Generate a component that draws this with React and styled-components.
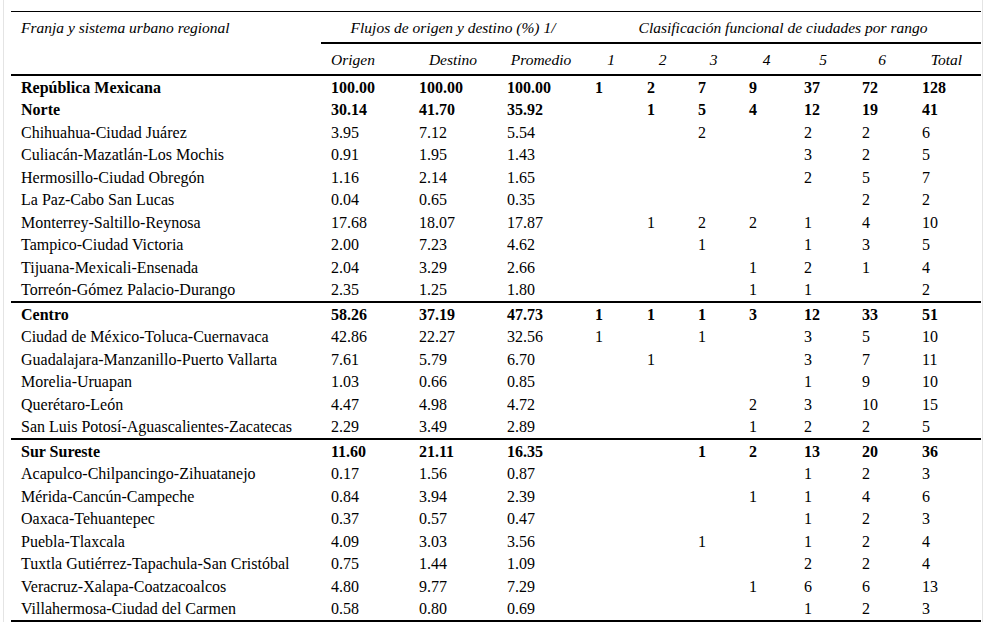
import React from "react";
import styled, { createGlobalStyle } from "styled-components";

const Global = createGlobalStyle`
  html, body { margin: 0; padding: 0; background: #fff; }
  body { font-family: "Liberation Serif", "Times New Roman", serif; color: #000; }
`;

const Frame = styled.div`
  margin-left: 3px;
  width: 980px;
  box-sizing: border-box;
  border-left: 1px solid #e4e4e4;
  border-right: 1px solid #e4e4e4;
  padding: 11px 1px 0 7px;
`;

const Table = styled.table`
  width: 970px;
  table-layout: fixed;
  border-collapse: separate;
  border-spacing: 0;
  font-family: "Liberation Serif", "Times New Roman", serif;
  font-size: 16px;
  color: #000;
`;

const Col = styled.col`
  width: ${(p) => p.$w}px;
`;

const HeadCell = styled.th`
  font-family: "Liberation Serif", "Times New Roman", serif;
  font-weight: normal;
  font-style: italic;
  font-size: 15.5px;
  height: 30px;
  padding: 0 10px;
  box-sizing: content-box;
  vertical-align: middle;
  text-align: ${(p) => p.$align || "center"};
  white-space: nowrap;
  line-height: 17px;
  border-top: ${(p) => (p.$top ? "1px solid #000" : "0")};
  border-bottom: ${(p) => (p.$rule ? "2px solid #000" : p.$gap ? "2px solid transparent" : "0")};
`;

const Row = styled.tr`
  font-weight: ${(p) => (p.$bold ? "bold" : "normal")};
`;

const Cell = styled.td`
  font-family: "Liberation Serif", "Times New Roman", serif;
  font-size: 16px;
  padding: 2.5px 10px;
  line-height: 17.5px;
  text-align: left;
  white-space: nowrap;
  vertical-align: middle;
  border-top: ${(p) => (p.$section ? "2px solid #000" : "0")};
  border-bottom: ${(p) => (p.$last ? "2px solid #000" : "0")};
`;

const widths = [310, 88, 88, 88, 52, 51, 51, 55, 58, 60, 69];

const rows = [
  ["República Mexicana", "100.00", "100.00", "100.00", "1", "2", "7", "9", "37", "72", "128", "b"],
  ["Norte", "30.14", "41.70", "35.92", "", "1", "5", "4", "12", "19", "41", "b"],
  ["Chihuahua-Ciudad Juárez", "3.95", "7.12", "5.54", "", "", "2", "", "2", "2", "6"],
  ["Culiacán-Mazatlán-Los Mochis", "0.91", "1.95", "1.43", "", "", "", "", "3", "2", "5"],
  ["Hermosillo-Ciudad Obregón", "1.16", "2.14", "1.65", "", "", "", "", "2", "5", "7"],
  ["La Paz-Cabo San Lucas", "0.04", "0.65", "0.35", "", "", "", "", "", "2", "2"],
  ["Monterrey-Saltillo-Reynosa", "17.68", "18.07", "17.87", "", "1", "2", "2", "1", "4", "10"],
  ["Tampico-Ciudad Victoria", "2.00", "7.23", "4.62", "", "", "1", "", "1", "3", "5"],
  ["Tijuana-Mexicali-Ensenada", "2.04", "3.29", "2.66", "", "", "", "1", "2", "1", "4"],
  ["Torreón-Gómez Palacio-Durango", "2.35", "1.25", "1.80", "", "", "", "1", "1", "", "2"],
  ["Centro", "58.26", "37.19", "47.73", "1", "1", "1", "3", "12", "33", "51", "bs"],
  ["Ciudad de México-Toluca-Cuernavaca", "42.86", "22.27", "32.56", "1", "", "1", "", "3", "5", "10"],
  ["Guadalajara-Manzanillo-Puerto Vallarta", "7.61", "5.79", "6.70", "", "1", "", "", "3", "7", "11"],
  ["Morelia-Uruapan", "1.03", "0.66", "0.85", "", "", "", "", "1", "9", "10"],
  ["Querétaro-León", "4.47", "4.98", "4.72", "", "", "", "2", "3", "10", "15"],
  ["San Luis Potosí-Aguascalientes-Zacatecas", "2.29", "3.49", "2.89", "", "", "", "1", "2", "2", "5"],
  ["Sur Sureste", "11.60", "21.11", "16.35", "", "", "1", "2", "13", "20", "36", "bs"],
  ["Acapulco-Chilpancingo-Zihuatanejo", "0.17", "1.56", "0.87", "", "", "", "", "1", "2", "3"],
  ["Mérida-Cancún-Campeche", "0.84", "3.94", "2.39", "", "", "", "1", "1", "4", "6"],
  ["Oaxaca-Tehuantepec", "0.37", "0.57", "0.47", "", "", "", "", "1", "2", "3"],
  ["Puebla-Tlaxcala", "4.09", "3.03", "3.56", "", "", "1", "", "1", "2", "4"],
  ["Tuxtla Gutiérrez-Tapachula-San Cristóbal", "0.75", "1.44", "1.09", "", "", "", "", "2", "2", "4"],
  ["Veracruz-Xalapa-Coatzacoalcos", "4.80", "9.77", "7.29", "", "", "", "1", "6", "6", "13"],
  ["Villahermosa-Ciudad del Carmen", "0.58", "0.80", "0.69", "", "", "", "", "1", "2", "3"],
];

const subHeads = [
  ["", "left"],
  ["Origen", "left"],
  ["Destino", "center"],
  ["Promedio", "center"],
  ["1"], ["2"], ["3"], ["4"], ["5"], ["6"], ["Total"],
];

export default function App() {
  return (
    <>
      <Global />
      <Frame>
        <Table>
          <colgroup>
            {widths.map((w, i) => (
              <Col key={i} $w={w} />
            ))}
          </colgroup>
          <thead>
            <tr>
              <HeadCell $top $gap $align="left">Franja y sistema urbano regional</HeadCell>
              <HeadCell $top $rule colSpan={3}>Flujos de origen y destino (%) 1/</HeadCell>
              <HeadCell $top $rule colSpan={7}>Clasificación funcional de ciudades por rango</HeadCell>
            </tr>
            <tr>
              {subHeads.map(([t, a], i) => (
                <HeadCell key={i} $rule $align={a}>{t}</HeadCell>
              ))}
            </tr>
          </thead>
          <tbody>
            {rows.map((r, ri) => {
              const flag = r[11] || "";
              const last = ri === rows.length - 1;
              return (
                <Row key={ri} $bold={flag.includes("b")}>
                  {r.slice(0, 11).map((v, ci) => (
                    <Cell key={ci} $section={flag.includes("s")} $last={last}>{v}</Cell>
                  ))}
                </Row>
              );
            })}
          </tbody>
        </Table>
      </Frame>
    </>
  );
}
